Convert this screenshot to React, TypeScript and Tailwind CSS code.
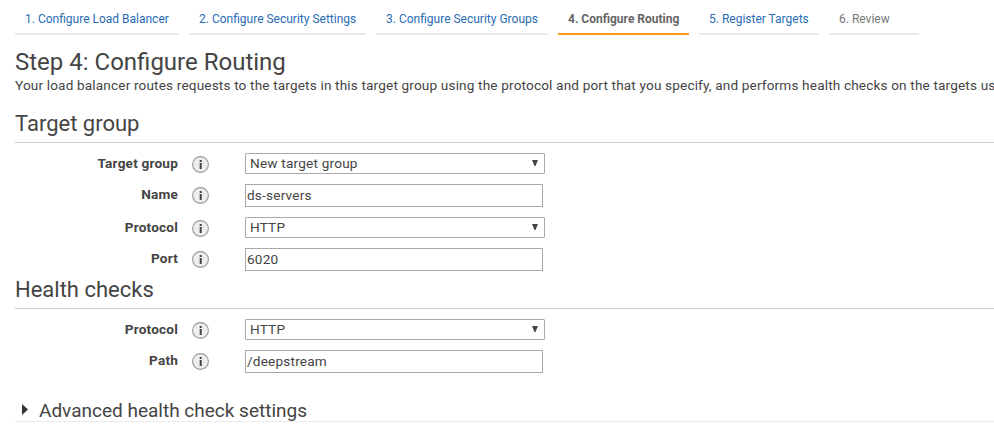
import React from "react";

type Tab = { label: string; box: string; tone: string };

const tabs: Tab[] = [
  { label: "1. Configure Load Balancer", box: "w-[164px]", tone: "border-[#eaeaea] text-[#2a6cb5]" },
  { label: "2. Configure Security Settings", box: "w-[177px]", tone: "border-[#eaeaea] text-[#2a6cb5]" },
  { label: "3. Configure Security Groups", box: "w-[172px]", tone: "border-[#eaeaea] text-[#2a6cb5]" },
  { label: "4. Configure Routing", box: "w-[131px]", tone: "border-[#ff9914] text-[#666666] font-bold" },
  { label: "5. Register Targets", box: "w-[120px]", tone: "border-[#eaeaea] text-[#2a6cb5]" },
  { label: "6. Review", box: "w-[90px]", tone: "border-[#eaeaea] text-[#777777]" },
];

function InfoIcon() {
  return (
    <svg width="17" height="17" viewBox="0 0 17 17" className="ml-[14px] mt-[3px] shrink-0">
      <circle cx="8.5" cy="8.5" r="7.9" fill="#eeeeee" stroke="#999999" strokeWidth="1.1" />
      <path d="M7.7 4h2v2h-2zM7.7 7h2v6h-2z" fill="#444444" />
    </svg>
  );
}

function Row({ label, height, children }: { label: string; height: string; children: React.ReactNode }) {
  return (
    <div className={`flex items-start ${height}`}>
      <div className="w-[163px] text-right text-[13.6px] font-bold leading-[21px] tracking-[0.2px]">{label}</div>
      {children}
    </div>
  );
}

function SelectBox({ value }: { value: string }) {
  return (
    <>
      <InfoIcon />
      <div className="ml-[36px] flex h-[21px] w-[300px] items-center justify-between rounded-[1px] border border-[#a9a9a9] pl-1 pr-[6px] text-[13.6px] leading-[19px] tracking-[0.2px]">
        <span>{value}</span>
        <svg width="6" height="6" viewBox="0 0 6 6" className="-mt-[2px]">
          <path d="M0 0h6L3.5 6h-1z" fill="#444444" />
        </svg>
      </div>
    </>
  );
}

function InputBox({ value }: { value: string }) {
  return (
    <>
      <InfoIcon />
      <div className="ml-[36px] h-[23px] w-[298px] border border-[#a9a9a9] pl-px text-[13.6px] leading-[21px] tracking-[0.2px]">{value}</div>
    </>
  );
}

export default function App() {
  return (
    <div className="h-[448px] w-full overflow-hidden bg-white pl-[15px] font-['Roboto',sans-serif] text-[#444444]">
      <nav className="flex h-[35px] gap-[10px]">
        {tabs.map((t) => (
          <div key={t.label} className={`h-[35px] whitespace-nowrap border-b-2 pl-[10px] pt-[11px] text-[12px] leading-4 ${t.box} ${t.tone}`}>
            <span>{t.label}</span>
          </div>
        ))}
      </nav>
      <h1 className="mt-[12px] h-[30px] text-[24px] leading-[30px]">Step 4: Configure Routing</h1>
      <p className="h-[18px] whitespace-nowrap text-[13.6px] leading-[17px] tracking-[0.155px]">
        Your load balancer routes requests to the targets in this target group using the protocol and port that you specify, and performs health checks on the targets us
      </p>
      <h2 className="mt-[14px] h-[34px] border-b border-[#cccccc] text-[22px] leading-[30px]">Target group</h2>
      <section className="pt-[10px]">
        <Row label="Target group" height="h-[31px]"><SelectBox value="New target group" /></Row>
        <Row label="Name" height="h-[33px]"><InputBox value="ds-servers" /></Row>
        <Row label="Protocol" height="h-[31px]"><SelectBox value="HTTP" /></Row>
        <Row label="Port" height="h-[23px]"><InputBox value="6020" /></Row>
      </section>
      <h2 className="mt-[4px] h-[34px] border-b border-[#cccccc] text-[22px] leading-[30px]">Health checks</h2>
      <section className="pt-[10px]">
        <Row label="Protocol" height="h-[31px]"><SelectBox value="HTTP" /></Row>
        <Row label="Path" height="h-[23px]"><InputBox value="/deepstream" /></Row>
      </section>
      <div className="mt-[25px] flex h-[24px] items-start border-b border-[#eaeaea] pl-[7px]">
        <svg width="6" height="11" viewBox="0 0 6 11" className="mt-[6px]">
          <path d="M0 0l6 5.5L0 11z" fill="#333333" />
        </svg>
        <h3 className="ml-[11px] pt-px text-[19px] leading-[23px]">Advanced health check settings</h3>
      </div>
    </div>
  );
}
